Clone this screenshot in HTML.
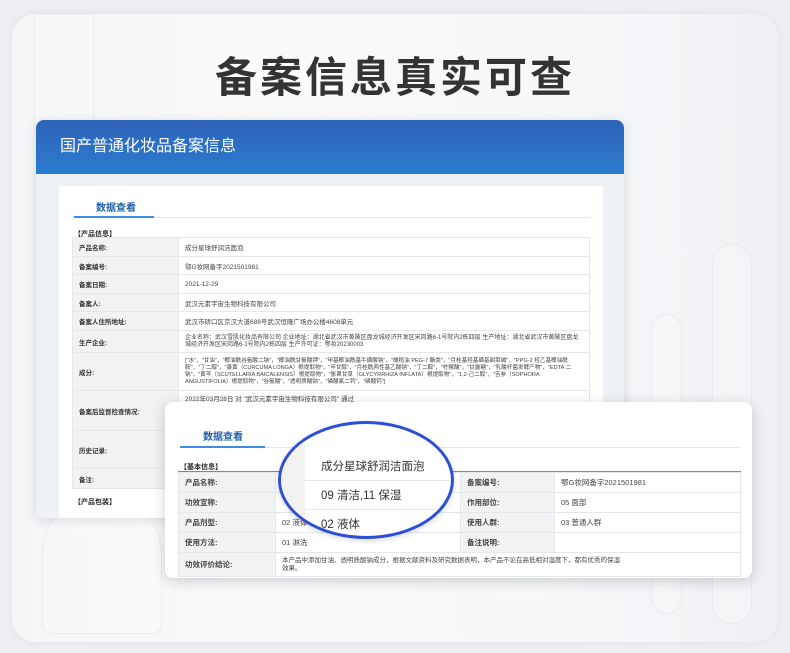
<!DOCTYPE html>
<html><head><meta charset="utf-8"><style>
*{margin:0;padding:0;box-sizing:border-box}
body{width:790px;height:653px;overflow:hidden;background:#eceef1;font-family:"Liberation Sans","Noto Sans CJK SC",sans-serif;position:relative}
.bg{position:absolute;left:12px;top:14px;width:766px;height:628px;border-radius:24px;background:linear-gradient(90deg,#f4f5f7 0%,#fafafb 30%,#f7f8fa 70%,#eef0f3 100%);box-shadow:0 0 10px rgba(0,0,0,.05);overflow:hidden}
.glass{position:absolute;border:1px solid rgba(215,219,225,.45);border-radius:8px;background:rgba(255,255,255,.25)}
.title{position:absolute;left:0;width:790px;top:44px;text-align:center;font-size:42px;font-weight:bold;color:#333;letter-spacing:3px;font-family:"Noto Sans CJK SC",sans-serif}
.back{position:absolute;left:36px;top:120px;width:588px;height:398px;background:#eef1f5;border-radius:8px 8px 0 0;box-shadow:0 2px 12px rgba(0,0,0,.12);overflow:hidden}
.hdr{height:54px;background:linear-gradient(180deg,#2f63b8,#2a7ccf);color:#fff;font-size:16px;padding:12px 0 0 24px;font-family:"Noto Sans CJK SC",sans-serif}
.panel{position:absolute;left:23px;top:66px;width:544px;height:340px;background:#fff}
.tab{position:absolute;font-weight:bold;color:#1d5ea8;font-size:10px}
.tl{position:absolute;height:1px;background:#e3e6ea}
.tb{position:absolute;height:2px;background:#3b8ee0}
.sec{position:absolute;font-size:7px;font-weight:bold;color:#222}
table{border-collapse:collapse;position:absolute;font-size:6.5px;color:#444}
td{border:1px solid #e4e7eb;padding:0 6px;vertical-align:middle}
td.l{background:#f2f2f2;font-weight:bold;color:#333}
.front{position:absolute;left:165px;top:402px;width:587px;height:176px;background:#fff;border-radius:8px;box-shadow:0 3px 14px rgba(0,0,0,.18)}
.ft td{font-size:7.5px;color:#444}
.circle{position:absolute;left:278px;top:421px;width:176px;height:118px;border:3px solid #2c4fd8;border-radius:50%;background:#fff;overflow:hidden;box-shadow:0 2px 6px rgba(0,0,0,.15)}
.circle .g{position:absolute;left:0;top:0;width:24px;height:118px;background:#f2f2f2}
.circle .r{position:absolute;left:24px;width:160px;border-top:1px solid #e4e7eb;font-size:11.5px;color:#333;padding-left:16px}
</style></head><body>
<div class="bg">
<div class="glass" style="left:22px;top:0;width:60px;height:130px;border-radius:0 0 10px 10px"></div>
<div class="glass" style="left:700px;top:230px;width:40px;height:380px;border-radius:20px"></div>
<div class="glass" style="left:640px;top:300px;width:30px;height:300px;border-radius:15px"></div>
<div class="glass" style="left:30px;top:480px;width:120px;height:140px;border-radius:60px 60px 10px 10px"></div>
</div>
<div class="title">备案信息真实可查</div>
<div class="back">
<div class="hdr">国产普通化妆品备案信息</div>
<div class="panel"></div>
<div class="tab" style="left:60px;top:79px">数据查看</div>
<div class="tl" style="left:38px;top:97px;width:516px"></div>
<div class="tb" style="left:38px;top:96px;width:80px"></div>
<div class="sec" style="left:38px;top:109px">【产品信息】</div>
<table style="left:36px;top:117px;width:518px">
<tr style="height:19px"><td class="l" style="width:106px">产品名称:</td><td>成分星球舒润洁面泡</td></tr>
<tr style="height:18px"><td class="l">备案编号:</td><td>鄂G妆网备字2021501981</td></tr>
<tr style="height:19px"><td class="l">备案日期:</td><td>2021-12-29</td></tr>
<tr style="height:18px"><td class="l">备案人:</td><td>武汉元素宇宙生物科技有限公司</td></tr>
<tr style="height:19px"><td class="l">备案人住所地址:</td><td>武汉市硚口区京汉大道688号武汉恒隆广场办公楼4608单元</td></tr>
<tr style="height:22px"><td class="l">生产企业:</td><td style="font-size:6px;line-height:7px">企业名称：武汉雪肌化妆品有限公司 企业地址：湖北省武汉市黄陂区盘龙城经济开发区宋岗路6-1号院内2栋四层 生产地址：湖北省武汉市黄陂区盘龙城经济开发区宋岗路6-1号院内2栋四层 生产许可证：鄂妆20230003</td></tr>
<tr style="height:38px"><td class="l">成分:</td><td style="font-size:5.6px;line-height:7px">["水"，"甘油"，"椰油酰谷氨酸二钠"，"椰油酰甘氨酸钾"，"甲基椰油酰基牛磺酸钠"，"橄榄油 PEG-7 酯类"，"月桂基羟基磺基甜菜碱"，"PPG-2 羟乙基椰油酰胺"，"丁二醇"，"姜黄（CURCUMA LONGA）根提取物"，"辛甘醇"，"月桂酰两性基乙酸钠"，"丁二醇"，"柠檬酸"，"甘露糖"，"乳酸杆菌发酵产物"，"EDTA 二钠"，"黄芩（SCUTELLARIA BAICALENSIS）根提取物"，"胀果甘草（GLYCYRRHIZA INFLATA）根提取物"，"1,2-己二醇"，"苦参（SOPHORA ANGUSTIFOLIA）根提取物"，"谷氨酸"，"透明质酸钠"，"磷酸氯二钙"，"磷酸钙"]</td></tr>
<tr style="height:40px"><td class="l">备案后监督检查情况:</td><td style="vertical-align:top;padding-top:2px">2022年03月28日 对 "武汉元素宇宙生物科技有限公司" 通过</td></tr>
<tr style="height:38px"><td class="l">历史记录:</td><td></td></tr>
<tr style="height:20px"><td class="l">备注:</td><td></td></tr>
</table>
<div class="sec" style="left:38px;top:377px">【产品包装】</div>
</div>
<div class="front">
<div class="tab" style="left:38px;top:26px;font-size:10px">数据查看</div>
<div class="tl" style="left:15px;top:45px;width:561px"></div>
<div class="tb" style="left:15px;top:44px;width:85px"></div>
<div class="sec" style="left:15px;top:60px">【基本信息】</div>
<div style="position:absolute;left:13px;top:69px;width:563px;height:1px;background:#5a8fd6"></div>
<table class="ft" style="left:13px;top:70px;width:563px">
<tr style="height:20px"><td class="l" style="width:97px">产品名称:</td><td style="width:185px"></td><td class="l" style="width:94px">备案编号:</td><td>鄂G妆网备字2021501981</td></tr>
<tr style="height:20px"><td class="l">功效宣称:</td><td></td><td class="l">作用部位:</td><td>05 面部</td></tr>
<tr style="height:20px"><td class="l">产品剂型:</td><td>02 液体</td><td class="l">使用人群:</td><td>03 普通人群</td></tr>
<tr style="height:20px"><td class="l">使用方法:</td><td>01 淋洗</td><td class="l">备注说明:</td><td></td></tr>
<tr style="height:24px"><td class="l">功效评价结论:</td><td colspan="3" style="font-size:6.5px;line-height:8px">本产品中添加甘油、透明质酸钠成分，根据文献资料及研究数据表明，本产品不论在高低相对湿度下，都有优秀的保湿<br>效果。</td></tr>
</table>
</div>
<div class="circle">
<div class="g"></div>
<div class="r" style="top:0;height:56px;border-top:none;padding-top:34px">成分星球舒润洁面泡</div>
<div class="r" style="top:56px;height:29px;padding-top:6px">09 清洁,11 保湿</div>
<div class="r" style="top:85px;height:40px;padding-top:6px">02 液体</div>
</div>
</body></html>
